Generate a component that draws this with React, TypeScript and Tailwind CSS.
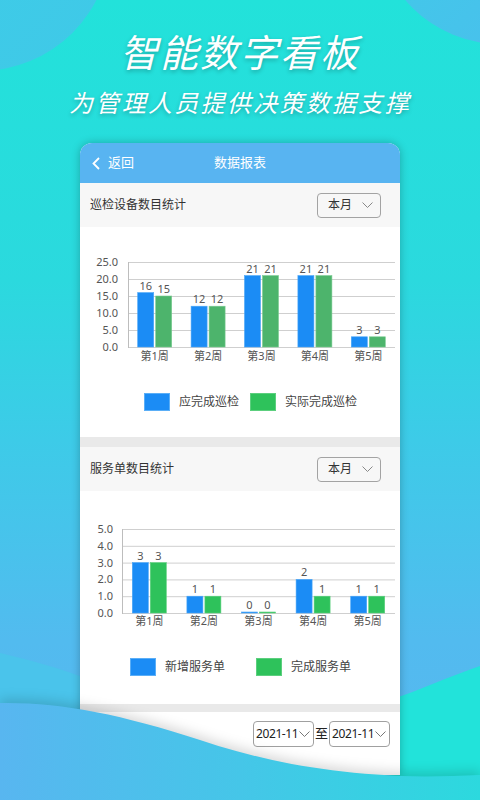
import React from "react";

type Series = { label: string; a: number; b: number };

const week1: Series[] = [
  { label: "第1周", a: 16, b: 15 },
  { label: "第2周", a: 12, b: 12 },
  { label: "第3周", a: 21, b: 21 },
  { label: "第4周", a: 21, b: 21 },
  { label: "第5周", a: 3, b: 3 },
];

const week2: Series[] = [
  { label: "第1周", a: 3, b: 3 },
  { label: "第2周", a: 1, b: 1 },
  { label: "第3周", a: 0, b: 0 },
  { label: "第4周", a: 2, b: 1 },
  { label: "第5周", a: 1, b: 1 },
];

const FONT = '"Noto Sans", "Noto Sans CJK SC", sans-serif';

function BarChart({
  data,
  max,
  step,
  axisX,
  top,
  bottom,
  labelRight,
  xLabelY,
  greenFill,
  greenStroke,
}: {
  data: Series[];
  max: number;
  step: number;
  axisX: number;
  top: number;
  bottom: number;
  labelRight: number;
  xLabelY: number;
  greenFill: string;
  greenStroke: string;
}) {
  const right = 315;
  const cat = (right - axisX) / data.length;
  const scale = (bottom - top) / max;
  const ticks: number[] = [];
  for (let v = 0; v <= max + 0.001; v += step) ticks.push(v);
  return (
    <svg width={320} height={145} style={{ fontFamily: FONT }} className="block">
      {ticks.map((t) => {
        const y = bottom - t * scale;
        return (
          <g key={t}>
            <line x1={axisX} x2={right} y1={y + 0.5} y2={y + 0.5} stroke="#cfcfcf" strokeWidth={1} />
            <text x={labelRight} y={y + 4} textAnchor="end" fontSize={11} fill="#555">
              {t.toFixed(1)}
            </text>
          </g>
        );
      })}
      <line x1={axisX + 0.5} x2={axisX + 0.5} y1={top} y2={bottom + 1} stroke="#bdbdbd" strokeWidth={1} />
      {data.map((d, i) => {
        const cx = axisX + cat * i + cat / 2;
        const ha = Math.max(d.a * scale, 1);
        const hb = Math.max(d.b * scale, 1);
        return (
          <g key={d.label}>
            <rect x={cx - 17} y={bottom - ha} width={16} height={ha} fill="#1b8cf5" stroke="#4aa6f7" strokeWidth={0.6} />
            <rect x={cx + 1} y={bottom - hb} width={16} height={hb} fill={greenFill} stroke={greenStroke} strokeWidth={0.6} />
            <text x={cx - 9} y={bottom - ha - 3} textAnchor="middle" fontSize={11} fill="#555">
              {d.a}
            </text>
            <text x={cx + 9} y={bottom - hb - 3} textAnchor="middle" fontSize={11} fill="#555">
              {d.b}
            </text>
            <text x={cx} y={xLabelY + 4} textAnchor="middle" fontSize={11} fill="#555">
              {d.label}
            </text>
          </g>
        );
      })}
    </svg>
  );
}

function Dropdown() {
  return (
    <div className="flex h-[25px] w-[64px] items-center rounded-[4px] border border-[#a3a3a3] pl-[10px] text-[12px] text-[#333]">
      <span>本月</span>
      <svg width="11" height="7" viewBox="0 0 11 7" className="ml-[10px]">
        <polyline points="0.5,0.5 5.5,5.5 10.5,0.5" fill="none" stroke="#888" strokeWidth="1" />
      </svg>
    </div>
  );
}

function SectionHeader({ title }: { title: string }) {
  return (
    <div className="flex h-[44px] items-center justify-between bg-[#f7f7f7] pl-[10px] pr-[19px]">
      <span className="text-[12px] text-[#333]">{title}</span>
      <Dropdown />
    </div>
  );
}

function Legend({
  left,
  firstWidth,
  a,
  b,
}: {
  left: number;
  firstWidth: number;
  a: string;
  b: string;
}) {
  return (
    <div className="flex h-[18px] items-center" style={{ paddingLeft: left }}>
      <div className="flex items-center" style={{ width: firstWidth }}>
        <div className="h-[18px] w-[26px] border border-[#5aaef7] bg-[#1b8cf5]" />
        <span className="ml-[9px] text-[12px] text-[#444]">{a}</span>
      </div>
      <div className="flex items-center">
        <div className="h-[18px] w-[26px] border border-[#5ccf7e] bg-[#2ec25b]" />
        <span className="ml-[9px] text-[12px] text-[#444]">{b}</span>
      </div>
    </div>
  );
}

function MonthSelect() {
  return (
    <div className="flex h-[26px] w-[61px] items-center overflow-hidden whitespace-nowrap rounded-[4px] border border-[#a0a0a0] bg-white pl-[2px] text-[12px] tracking-[-0.4px] text-[#222]">
      <span>2021-11</span>
      <svg width="11" height="7" viewBox="0 0 11 7" className="ml-[1px] shrink-0">
        <polyline points="0.5,0.5 5.5,5.5 10.5,0.5" fill="none" stroke="#777" strokeWidth="1" />
      </svg>
    </div>
  );
}

export default function App() {
  return (
    <div
      className="relative h-[800px] w-[480px] overflow-hidden bg-[linear-gradient(180deg,#22e2da_0%,#2bd9de_35%,#3dcbe8_55%,#52bbef_80%,#58b6f0_100%)]"
      style={{ fontFamily: FONT }}
    >
      {/* backdrop shapes */}
      <svg className="absolute left-0 top-0" width={480} height={800}>
        <defs>
          <linearGradient id="tl" x1="0" y1="0" x2="1" y2="1">
            <stop offset="0" stopColor="#3bd0e6" />
            <stop offset="1" stopColor="#40c8e8" />
          </linearGradient>
          <linearGradient id="tr" x1="0" y1="0" x2="1" y2="1">
            <stop offset="0" stopColor="#3ccfe6" />
            <stop offset="1" stopColor="#4cbcee" />
          </linearGradient>
        </defs>
        <circle cx={-20} cy={-60} r={131} fill="url(#tl)" />
        <circle cx={500} cy={-80} r={124} fill="url(#tr)" />
        <path d="M0 653 C 30 660 60 668 90 680 L 90 800 L 0 800 Z" fill="#4ac4eb" />
        <path d="M390 700 C 420 690 450 676 480 666 L 480 800 L 390 800 Z" fill="#22e3da" />
      </svg>

      <div className="relative flex flex-col items-center pt-[30px]">
        <h1 className="h-[44px] text-[38px] italic leading-[44px] tracking-[2px] text-white [text-shadow:0_2px_4px_rgba(0,0,0,0.25)]">
          智能数字看板
        </h1>
        <p className="mt-[14px] h-[30px] text-[24px] italic leading-[30px] tracking-[2.3px] text-white [text-shadow:0_2px_4px_rgba(0,0,0,0.25)]">
          为管理人员提供决策数据支撑
        </p>

        <div className="mt-[25px] h-[632px] w-[320px] overflow-hidden rounded-t-[12px] bg-white shadow-[0_0_8px_rgba(0,0,0,0.25)]">
          <div className="grid h-[40px] grid-cols-[1fr_auto_1fr] items-center bg-[#58b4f1] text-[13px] text-white">
            <div className="flex items-center pl-[12px]">
              <svg width="8" height="13" viewBox="0 0 8 13">
                <polyline points="7,1 1.5,6.5 7,12" fill="none" stroke="#fff" strokeWidth="1.8" />
              </svg>
              <span className="ml-[8px]">返回</span>
            </div>
            <span>数据报表</span>
            <div />
          </div>

          <SectionHeader title="巡检设备数目统计" />
          <div className="h-[210px] bg-white">
            <BarChart
              data={week1}
              max={25}
              step={5}
              axisX={48}
              top={35}
              bottom={120}
              labelRight={38}
              xLabelY={129}
              greenFill="#4db46c"
              greenStroke="#7acb92"
            />
            <div className="mt-[21px]">
              <Legend left={64} firstWidth={106} a="应完成巡检" b="实际完成巡检" />
            </div>
          </div>

          <div className="h-[10px] bg-[#e9e9e9]" />

          <SectionHeader title="服务单数目统计" />
          <div className="h-[213px] bg-white">
            <BarChart
              data={week2}
              max={5}
              step={1}
              axisX={42}
              top={38}
              bottom={122}
              labelRight={33}
              xLabelY={130}
              greenFill="#2ec25b"
              greenStroke="#5ccf7e"
            />
            <div className="mt-[22px]">
              <Legend left={50} firstWidth={126} a="新增服务单" b="完成服务单" />
            </div>
          </div>

          <div className="h-[8px] bg-[#e9e9e9]" />

          <div className="flex justify-end pr-[10px] pt-[9px]">
            <div className="flex items-center">
              <MonthSelect />
              <span className="mx-[1px] text-[13px] text-[#222]">至</span>
              <MonthSelect />
            </div>
          </div>
        </div>
      </div>

      {/* foreground wave */}
      <svg
        className="absolute bottom-0 left-0 drop-shadow-[0_-4px_6px_rgba(0,0,0,0.15)]"
        width={480}
        height={100}
        viewBox="0 0 480 100"
      >
        <defs>
          <linearGradient id="wave" x1="0" y1="0" x2="1" y2="0">
            <stop offset="0" stopColor="#58b6f0" />
            <stop offset="0.5" stopColor="#45c6e8" />
            <stop offset="1" stopColor="#2cd9de" />
          </linearGradient>
        </defs>
        <path
          d="M0 3 C 60 2 120 14 200 40 C 260 60 320 72 400 76 C 430 77 455 76 480 75 L 480 100 L 0 100 Z"
          fill="url(#wave)"
        />
      </svg>
    </div>
  );
}
